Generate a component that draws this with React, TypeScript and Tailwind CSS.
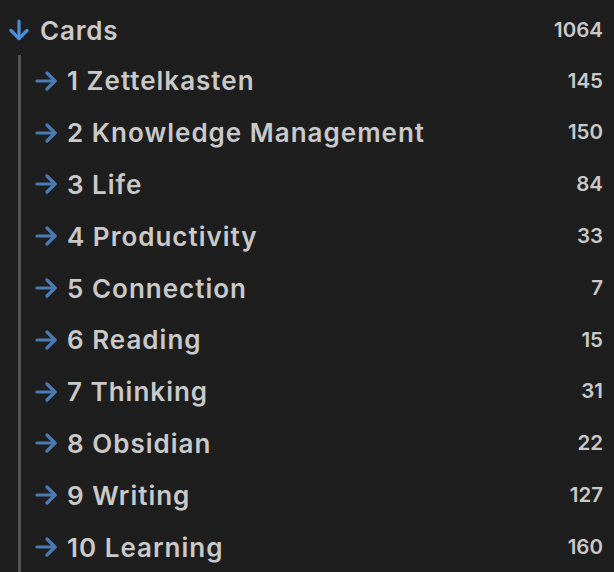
import React from "react";

const items: [string, number][] = [
  ["1 Zettelkasten", 145],
  ["2 Knowledge Management", 150],
  ["3 Life", 84],
  ["4 Productivity", 33],
  ["5 Connection", 7],
  ["6 Reading", 15],
  ["7 Thinking", 31],
  ["8 Obsidian", 22],
  ["9 Writing", 127],
  ["10 Learning", 160],
];

function DownArrow() {
  return (
    <svg width="20" height="22" viewBox="0 0 20 22" fill="none" stroke="#4a8fdb" strokeWidth="3.2" strokeLinecap="round" strokeLinejoin="round">
      <path d="M10 2v17.5" />
      <path d="M2 11.5l8 8 8-8" />
    </svg>
  );
}

function RightArrow() {
  return (
    <svg width="22" height="20" viewBox="0 0 22 20" fill="none" stroke="#4a7bb5" strokeWidth="3.2" strokeLinecap="round" strokeLinejoin="round">
      <path d="M2 10h18" />
      <path d="M12 2l8 8-8 8" />
    </svg>
  );
}

export default function App() {
  return (
    <div
      className="w-[614px] h-[572px] bg-[#1e1e1e] text-[#c9c9c9] overflow-hidden"
      style={{ fontFamily: "Inter, 'Noto Sans', sans-serif" }}
    >
      <div className="flex items-center h-[55px] pl-[9px] pr-[11px] pt-[5px]">
        <DownArrow />
        <span className="ml-[11px] text-[26px] font-semibold tracking-[0.8px]">Cards</span>
        <span className="ml-auto text-[20.5px] font-semibold">1064</span>
      </div>
      <div className="ml-[18px] border-l-[3px] border-[#555555]">
        {items.map(([label, n]) => (
          <div key={label} className="flex items-center h-[51.8px] pl-[14px] pr-[11px]">
            <RightArrow />
            <span className="ml-[10px] text-[26px] font-semibold tracking-[1px]">{label}</span>
            <span className="ml-auto text-[20.5px] font-semibold">{n}</span>
          </div>
        ))}
      </div>
    </div>
  );
}
